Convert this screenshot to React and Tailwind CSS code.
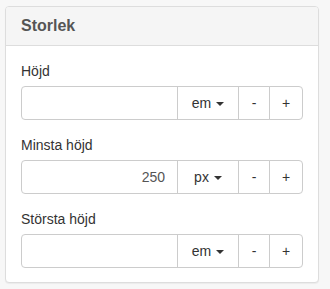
import React from 'react';

const fields = [
  { label: 'Höjd', value: '', unit: 'em' },
  { label: 'Minsta höjd', value: '250', unit: 'px' },
  { label: 'Största höjd', value: '', unit: 'em' },
];

function SizeField({ label, value, unit, last }) {
  return (
    <div className={last ? 'mb-[14px]' : 'mb-[15px]'}>
      <label className="mb-[5px] block text-[14px] leading-[20px] text-[#333]">{label}</label>
      <div className="flex h-[34px] w-full">
        <input
          type="text"
          defaultValue={value}
          className="h-[34px] min-w-0 flex-1 rounded-l-[4px] border border-[#ccc] bg-white px-[12px] text-right text-[14px] text-[#555] outline-none"
        />
        <button className="-ml-px flex h-[34px] w-[62px] items-center justify-center gap-[5px] border border-[#ccc] bg-white text-[14px] text-[#333]">
          {unit}
          <span className="mt-[1px] h-0 w-0 border-x-[4px] border-t-[4px] border-x-transparent border-t-[#333]" />
        </button>
        <button className="-ml-px flex h-[34px] w-[32px] items-center justify-center border border-[#ccc] bg-white text-[14px] text-[#333]">
          -
        </button>
        <button className="-ml-px flex h-[34px] w-[34px] items-center justify-center rounded-r-[4px] border border-[#ccc] bg-white text-[14px] text-[#333]">
          +
        </button>
      </div>
    </div>
  );
}

export default function App() {
  return (
    <div className="min-h-[289px] w-[330px] bg-[#f7f7f7] pt-[6px] font-['Liberation_Sans',Arial,sans-serif]">
      <div className="ml-[5px] w-[314px] rounded-[4px] border border-[#ddd] bg-white shadow-[0_1px_1px_rgba(0,0,0,0.05)]">
        <div className="rounded-t-[3px] border-b border-[#ddd] bg-[#f5f5f5] px-[15px] py-[10px]">
          <h3 className="text-[16px] font-bold leading-[18px] text-[#555]">Storlek</h3>
        </div>
        <div className="px-[15px] pt-[15px]">
          {fields.map((f, i) => (
            <SizeField key={f.label} {...f} last={i === fields.length - 1} />
          ))}
        </div>
      </div>
    </div>
  );
}
